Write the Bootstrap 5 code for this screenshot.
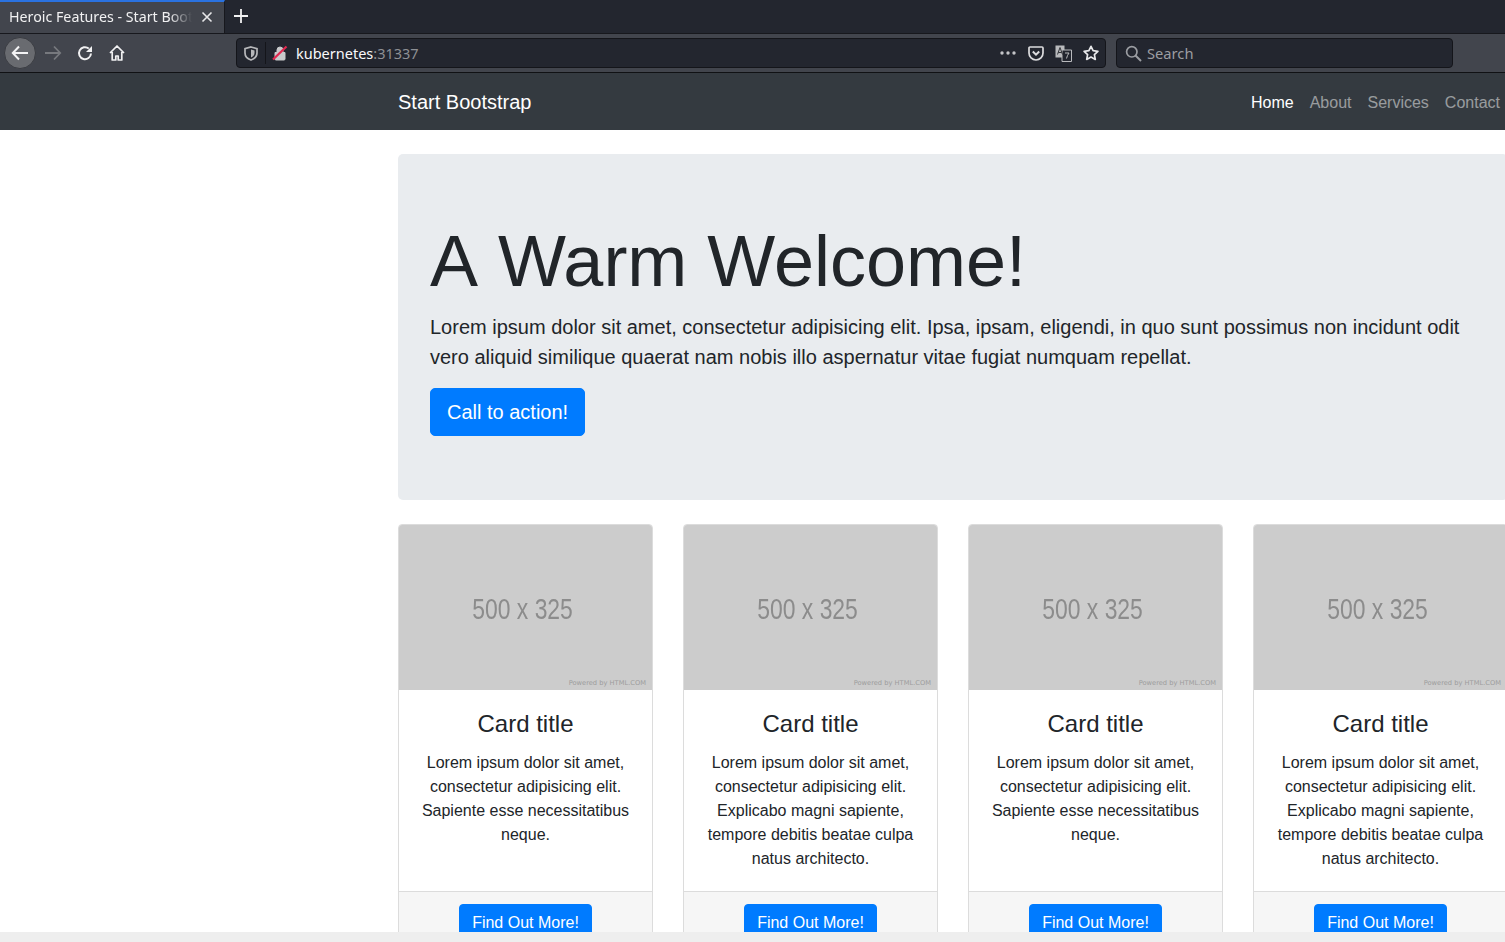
<!DOCTYPE html>
<html lang="en">
<head>
<meta charset="utf-8">
<title>Heroic Features - Start Bootstrap</title>
<link rel="stylesheet" href="https://cdn.jsdelivr.net/npm/bootstrap@5.3.0/dist/css/bootstrap.min.css">
<style>
html,body{height:942px;overflow:hidden;}
body{font-family:"Liberation Sans",Arial,sans-serif;font-size:16px;color:#212529;background:#fff;display:flex;flex-direction:column;}
.ff-chrome{font-family:"Noto Sans","Open Sans",sans-serif;}
.tabstrip{height:33px;background:#23262f;flex:none;}
.tabitem{width:225px;height:33px;background:#42454d;border-top:2px solid #2a72e0;color:#f1f1f2;font-size:14.24px;padding:0 11px 2px 9px;border-right:1px solid #17181d;}
.tabname{width:183px;white-space:nowrap;overflow:hidden;-webkit-mask-image:linear-gradient(90deg,#000 160px,transparent 183px);mask-image:linear-gradient(90deg,#000 160px,transparent 183px);}
.newtab{width:32px;padding-bottom:1px;}
.toolrow{height:40px;background:#42454d;border-top:1px solid #17181d;border-bottom:1px solid #101114;flex:none;padding-left:4px;}
.navbtn{width:32px;height:32px;border-radius:50%;}
.navbtn-on{background:#696b70;border:1px solid #3a3c42;}
.navshift{margin-left:1px;margin-right:-1px;}
.spacer-a{width:104px;}
.urlbar{width:870px;height:30px;background:#23262f;border:1px solid #14151a;border-radius:4px;color:#f9f9fa;font-size:14.5px;padding-left:7px;}
.searchbar{width:337px;height:30px;margin-left:10px;background:#23262f;border:1px solid #14151a;border-radius:4px;color:#9b9da2;font-size:14.7px;padding-left:8px;}
.urlsep{width:1px;height:22px;background:#14151a;margin:0 6px 0 7px;}
.urlactions{gap:11px;margin-right:6px;}
.urlname{margin-left:8px;padding-top:1px;}
.searchname{margin-left:5px;}
.dimtext{color:#8e9095;}
.topnav{height:57px;background:#343a40;flex:none;padding:0;}
.pagewrap{width:1140px;margin-left:383px;padding:0 15px;flex:none;}
.brandname{font-size:20px;color:#fff;}
.topnav .nav-link{padding:9px 8px 7px;font-size:16px;color:rgba(255,255,255,.5);}
.topnav .nav-link.active{color:#fff;}
.hero{background:#e9ecef;border-radius:5px;padding:64px 32px;margin-top:24px;margin-bottom:24px;}
.herotitle{font-size:72px;line-height:1.2;font-weight:400;margin:0 0 8px;}
.heroinitial{word-spacing:4px;}
.herolead{font-size:20px;line-height:30px;margin:0 0 16px;}
.btn-blue{--bs-btn-bg:#007bff;--bs-btn-border-color:#007bff;--bs-btn-hover-bg:#0069d9;--bs-btn-hover-border-color:#0062cc;}
.btn-cta{font-size:20px;line-height:30px;padding:8px 16px;border-radius:5px;}
.cardrow{--bs-gutter-x:30px;width:1140px;margin:0 -15px;flex-wrap:nowrap;}
.cardrow>div{flex:none;width:285px;}
.tile{--bs-card-border-color:#dcdcdc;--bs-card-border-radius:4px;--bs-card-inner-border-radius:3px;text-align:center;height:100%;}
.tile .card-body{padding:20px;}
.tile .card-title{font-size:24px;line-height:1.2;margin:0 0 12px;font-weight:400;}
.tile .card-text{line-height:24px;margin:0;}
.tile .card-footer{padding:12px 20px;background:#f6f6f6;border-top:1px solid #dcdcdc;}
.btn-find{font-size:16px;line-height:24px;padding:6px 12px;border-radius:4px;}
.thumb{height:165px;background:#ccc;position:relative;border-radius:3px 3px 0 0;color:#8c8c8c;overflow:hidden;}
.thumbsize{font-size:29px;line-height:1;transform:scaleX(.79);padding-right:8px;margin-top:4px;filter:blur(.4px);}
.thumbby{position:absolute;right:6px;bottom:3px;font-size:6.7px;line-height:8px;color:#9c9c9c;font-family:"DejaVu Sans",sans-serif;white-space:nowrap;}
.pagescroll{flex:1 1 auto;min-height:0;overflow:hidden;}
.hscroll{height:10px;background:#eeeeee;flex:none;}
svg{display:block;flex:none;}
</style>
</head>
<body>
<div class="tabstrip d-flex ff-chrome">
  <div class="tabitem d-flex align-items-center">
    <div class="tabname">Heroic Features - Start Bootstrap</div>
    <svg class="ms-auto" width="12" height="12" viewBox="0 0 12 12"><path d="M1.500 1.500l9 9M10.500 1.500l-9 9" stroke="#e6e6e8" stroke-width="1.600" fill="none"/></svg>
  </div>
  <div class="newtab d-flex align-items-center justify-content-center"><svg width="14" height="14" viewBox="0 0 14 14"><path d="M7 0v14M0 7h14" stroke="#f1f1f2" stroke-width="1.800"/></svg></div>
</div>
<div class="toolrow d-flex align-items-center ff-chrome">
  <div class="navbtn navbtn-on d-flex align-items-center justify-content-center"><svg width="18" height="16" viewBox="0 0 18 16"><path d="M8 1.500L1.800 8 8 14.500M2 8h15" stroke="#f4f4f5" stroke-width="2" fill="none"/></svg></div>
  <div class="navbtn navshift d-flex align-items-center justify-content-center"><svg width="18" height="16" viewBox="0 0 18 16"><path d="M10 1.500L16.200 8 10 14.500M16 8H1" stroke="#77797e" stroke-width="1.800" fill="none"/></svg></div>
  <div class="navbtn navshift d-flex align-items-center justify-content-center"><svg width="16" height="16" viewBox="0 0 16 16"><path d="M14 8.500a6 6 0 1 1-2.200-5" stroke="#f1f1f2" stroke-width="2" fill="none"/><path d="M15 1v6H9z" fill="#f1f1f2"/></svg></div>
  <div class="navbtn navshift d-flex align-items-center justify-content-center"><svg width="16" height="16" viewBox="0 0 16 16"><path d="M1 8l7-7 7 7M3.200 7v8h3.600v-4h2.400v4h3.600V7" stroke="#f1f1f2" stroke-width="1.700" fill="none" stroke-linejoin="round"/></svg></div>
  <div class="spacer-a"></div>
  <div class="urlbar d-flex align-items-center">
    <svg width="14" height="15" viewBox="0 0 14 15"><path d="M7 1l6 1.600V7c0 3.400-2.500 5.800-6 7C3.500 12.800 1 10.400 1 7V2.600z" stroke="#b6b7ba" stroke-width="1.700" fill="none"/><path d="M7 3.500l3.500 1V7C10.500 9.200 9 10.800 7 11.500z" fill="#b6b7ba"/></svg>
    <div class="urlsep"></div>
    <svg width="16" height="16" viewBox="0 0 16 16"><path d="M3 7.500h10V14a1 1 0 0 1-1 1H4a1 1 0 0 1-1-1zM5 7.500V5a3 3 0 0 1 6 0v2.500" fill="#c9cacc" stroke="#c9cacc" stroke-width="1"/><path d="M1 14.500L14.500 1.500" stroke="#e22850" stroke-width="2.200"/></svg>
    <div class="urlname">kubernetes<span class="dimtext">:31337</span></div>
    <div class="ms-auto d-flex align-items-center urlactions">
      <svg width="18" height="4" viewBox="0 0 18 4"><circle cx="3" cy="2" r="1.700" fill="#c4c5c8"/><circle cx="9" cy="2" r="1.700" fill="#c4c5c8"/><circle cx="15" cy="2" r="1.700" fill="#c4c5c8"/></svg>
      <svg width="16" height="15" viewBox="0 0 16 15"><path d="M2 1h12a1 1 0 0 1 1 1v5a7 7 0 0 1-14 0V2a1 1 0 0 1 1-1z" stroke="#dcdcde" stroke-width="1.700" fill="none"/><path d="M4.800 5.500L8 8.700l3.200-3.200" stroke="#dcdcde" stroke-width="2" fill="none"/></svg>
      <svg width="17" height="17" viewBox="0 0 17 17"><path d="M0.500 0.500h9v12h-9z" fill="#b9babd"/><path d="M7 5h9.500v11.500H7z" fill="#23262f" stroke="#b9babd"/><path d="M5 2.500L2.500 9.500M5 2.500l2.500 7M3.300 7.500h3.400" stroke="#33353a" stroke-width="1" fill="none"/><path d="M10 8h4l-1.500 2.500-1 3" stroke="#b9babd" stroke-width="1" fill="none"/></svg>
      <svg width="16" height="16" viewBox="0 0 16 16"><path d="M8 1.300l2.100 4.400 4.800.6-3.500 3.300.9 4.800L8 12.100l-4.300 2.300.9-4.800L1.100 6.300l4.800-.6z" stroke="#e8e8ea" stroke-width="1.700" fill="none" stroke-linejoin="round"/></svg>
    </div>
  </div>
  <div class="searchbar d-flex align-items-center">
    <svg width="17" height="17" viewBox="0 0 17 17"><circle cx="6.800" cy="6.800" r="5.200" stroke="#9b9da2" stroke-width="1.700" fill="none"/><path d="M10.500 10.500l5.500 5.500" stroke="#9b9da2" stroke-width="2"/></svg>
    <div class="searchname">Search</div>
  </div>
</div>
<nav class="navbar navbar-dark topnav">
  <div class="pagewrap d-flex align-items-center">
    <a class="navbar-brand brandname p-0 m-0" href="#">Start Bootstrap</a>
    <ul class="navbar-nav flex-row ms-auto">
      <li class="nav-item"><a class="nav-link active" href="#">Home</a></li>
      <li class="nav-item"><a class="nav-link" href="#">About</a></li>
      <li class="nav-item"><a class="nav-link" href="#">Services</a></li>
      <li class="nav-item"><a class="nav-link" href="#">Contact</a></li>
    </ul>
  </div>
</nav>
<div class="pagescroll">
<div class="pagewrap">
  <header class="hero">
    <h1 class="herotitle"><span class="heroinitial">A </span>Warm Welcome!</h1>
    <p class="herolead">Lorem ipsum dolor sit amet, consectetur adipisicing elit. Ipsa, ipsam, eligendi, in quo sunt possimus non incidunt odit vero aliquid similique quaerat nam nobis illo aspernatur vitae fugiat numquam repellat.</p>
    <a href="#" class="btn btn-primary btn-blue btn-cta">Call to action!</a>
  </header>
  <div class="row cardrow">
    <div><div class="card tile">
      <div class="thumb d-flex align-items-center justify-content-center"><div class="thumbsize">500 x 325</div><div class="thumbby">Powered by HTML.COM</div></div>
      <div class="card-body"><h4 class="card-title">Card title</h4><p class="card-text">Lorem ipsum dolor sit amet, consectetur adipisicing elit. Sapiente esse necessitatibus neque.</p></div>
      <div class="card-footer"><a href="#" class="btn btn-primary btn-blue btn-find">Find Out More!</a></div>
    </div></div>
    <div><div class="card tile">
      <div class="thumb d-flex align-items-center justify-content-center"><div class="thumbsize">500 x 325</div><div class="thumbby">Powered by HTML.COM</div></div>
      <div class="card-body"><h4 class="card-title">Card title</h4><p class="card-text">Lorem ipsum dolor sit amet, consectetur adipisicing elit. Explicabo magni sapiente, tempore debitis beatae culpa natus architecto.</p></div>
      <div class="card-footer"><a href="#" class="btn btn-primary btn-blue btn-find">Find Out More!</a></div>
    </div></div>
    <div><div class="card tile">
      <div class="thumb d-flex align-items-center justify-content-center"><div class="thumbsize">500 x 325</div><div class="thumbby">Powered by HTML.COM</div></div>
      <div class="card-body"><h4 class="card-title">Card title</h4><p class="card-text">Lorem ipsum dolor sit amet, consectetur adipisicing elit. Sapiente esse necessitatibus neque.</p></div>
      <div class="card-footer"><a href="#" class="btn btn-primary btn-blue btn-find">Find Out More!</a></div>
    </div></div>
    <div><div class="card tile">
      <div class="thumb d-flex align-items-center justify-content-center"><div class="thumbsize">500 x 325</div><div class="thumbby">Powered by HTML.COM</div></div>
      <div class="card-body"><h4 class="card-title">Card title</h4><p class="card-text">Lorem ipsum dolor sit amet, consectetur adipisicing elit. Explicabo magni sapiente, tempore debitis beatae culpa natus architecto.</p></div>
      <div class="card-footer"><a href="#" class="btn btn-primary btn-blue btn-find">Find Out More!</a></div>
    </div></div>
  </div>
</div>
</div>
<div class="hscroll"></div>
<script src="https://cdn.jsdelivr.net/npm/bootstrap@5.3.0/dist/js/bootstrap.bundle.min.js"></script>
</body>
</html>
